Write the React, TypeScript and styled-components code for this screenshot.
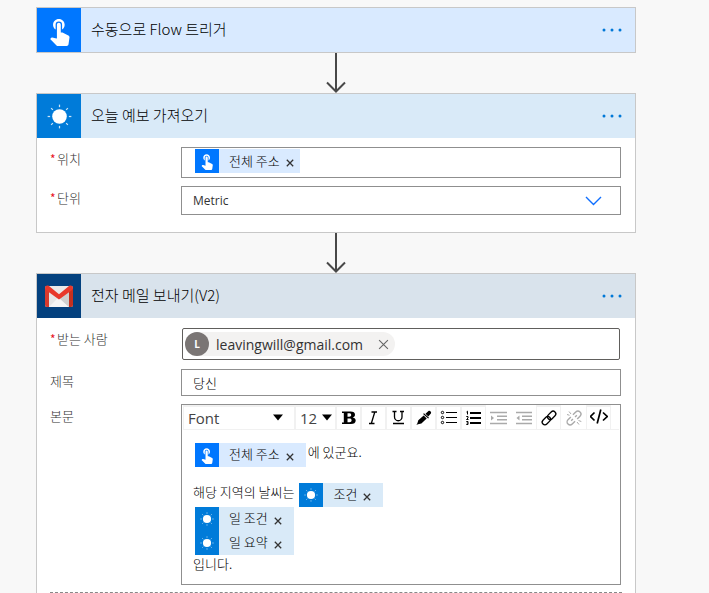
import React from "react";
import styled, { createGlobalStyle, css } from "styled-components";
import { MdTouchApp } from "react-icons/md";

const GlobalStyle = createGlobalStyle`
  * { box-sizing: border-box; }
  body {
    margin: 0;
    background: #f8f8f8;
    color: #333;
    font-family: "Open Sans", "Noto Sans CJK KR", sans-serif;
    font-size: 13px;
  }
  button, input, select { font: inherit; color: inherit; }
`;

const Page = styled.main`
  height: 100vh;
  overflow: hidden;
  padding: 7px 73px 0 36px;
`;

const Card = styled.section`
  border: 1px solid #c8c8c8;
  background: #fff;
`;

const CardHeader = styled.header<{ $tint: string }>`
  display: flex;
  align-items: center;
  height: 44px;
  background: ${(p) => p.$tint};
`;

const Brand = styled.span<{ $color: string; $small?: boolean }>`
  display: flex;
  flex: none;
  align-items: center;
  justify-content: center;
  width: ${(p) => (p.$small ? 24 : 44)}px;
  height: ${(p) => (p.$small ? 24 : 44)}px;
  background: ${(p) => p.$color};
  color: #fff;
`;

const Title = styled.h2`
  flex: 1;
  margin: 0 0 0 10px;
  padding-bottom: 3px;
  color: #000;
  font-size: 15px;
  font-weight: 300;
  font-family: "Noto Sans CJK KR", sans-serif;
`;

const IconButton = styled.button`
  display: flex;
  align-items: center;
  justify-content: center;
  flex: none;
  padding: 0;
  border: 0;
  background: none;
  cursor: pointer;
`;

const MoreButton = styled(IconButton)`
  width: 24px;
  height: 24px;
  margin-right: 11px;
  color: #0078d7;
`;

const Connector = styled.div`
  display: flex;
  justify-content: center;
  height: 40px;
  color: #484848;
`;

const CardBody = styled.div<{ $bottom: number }>`
  display: flex;
  flex-direction: column;
  gap: 8px;
  padding: 9px 14px ${(p) => p.$bottom}px 13px;
`;

const FieldRow = styled.div`
  display: grid;
  grid-template-columns: 131px 1fr;
  align-items: start;
`;

const Label = styled.label`
  display: flex;
  padding-top: 2px;
  color: #333;
  font-family: "Noto Sans CJK KR", sans-serif;
  font-weight: 300;
  line-height: 20px;
`;

const Required = styled.span`
  width: 7px;
  color: #e81123;
  font-size: 12px;
  font-weight: 400;
`;

const box = css`
  width: 100%;
  border: 1px solid #8f8f8f;
  background: #fff;
`;

const TokenField = styled.div`
  ${box}
  display: flex;
  align-items: flex-start;
  height: 31px;
  padding: 1px 13px;
`;

const PeopleField = styled.div`
  ${box}
  display: flex;
  align-items: center;
  width: auto;
  height: 32px;
  margin: 1px;
  padding: 0 2px;
  border-color: #605e5c;
  border-radius: 2px;
`;

const BareInput = styled.input`
  flex: 1;
  min-width: 0;
  align-self: stretch;
  border: 0;
  outline: 0;
  background: none;
`;

const TextInput = styled.input`
  ${box}
  height: 27px;
  padding: 0 11px;
  color: #000;
  font-family: "Noto Sans CJK KR", sans-serif;
  font-weight: 300;
`;

const SelectWrap = styled.div`
  position: relative;
`;

const Select = styled.select`
  ${box}
  height: 29px;
  padding: 0 11px;
  border-radius: 0;
  appearance: none;
  font-size: 12px;
`;

const SelectChevron = styled.svg`
  position: absolute;
  top: 10px;
  right: 19px;
  pointer-events: none;
`;

const TokenBox = styled.span<{ $tint: string; $wide?: boolean }>`
  display: inline-flex;
  align-items: center;
  height: 24px;
  padding-right: ${(p) => (p.$wide ? 10 : 4)}px;
  background: ${(p) => p.$tint};
  color: #000;
  font-family: "Noto Sans CJK KR", sans-serif;
  font-weight: 300;
`;

const TokenText = styled.span`
  margin: 0 4px 0 10px;
  padding-bottom: 2px;
  white-space: nowrap;
`;

const TokenClose = styled(IconButton)`
  width: 12px;
  height: 12px;
  margin-top: 3px;
  color: #333;
`;

const Person = styled.span`
  display: flex;
  align-items: center;
  height: 24px;
  border-radius: 12px;
  background: #f3f2f1;
  color: #333;
`;

const Avatar = styled.span`
  display: flex;
  align-items: center;
  justify-content: center;
  width: 24px;
  height: 24px;
  border-radius: 50%;
  background: #7a7574;
  color: #fff;
  font-size: 10px;
  font-weight: 700;
`;

const PersonName = styled.span`
  margin: 0 8px 0 7px;
  font-size: 14px;
`;

const PersonRemove = styled(IconButton)`
  width: 24px;
  height: 24px;
  color: #666;
`;

const Editor = styled.div`
  ${box}
`;

const Toolbar = styled.div`
  display: flex;
  margin: 0 1px 1px;
  height: 25px;
  border-bottom: 1px solid #f1f1f1;
`;

const cell = css`
  height: 25px;
  border: 1px solid #f1f1f1;
  border-top-width: 2px;
`;

const ToolSelectWrap = styled.span<{ $width: number }>`
  position: relative;
  flex: none;
  width: ${(p) => p.$width}px;
`;

const ToolSelect = styled.select`
  ${cell}
  width: 100%;
  padding: 0 4px;
  border-radius: 0;
  background: none;
  appearance: none;
  color: #444;
  font-size: 15px;
  line-height: 22px;
`;

const ToolCaret = styled.svg<{ $right: number }>`
  position: absolute;
  top: 9px;
  right: ${(p) => p.$right}px;
  pointer-events: none;
`;

const ToolButton = styled(IconButton)<{ $off?: boolean }>`
  ${cell}
  width: 25px;
  border-color: ${(p) => (p.$off ? "transparent" : "#f1f1f1")};
  color: ${(p) => (p.$off ? "#aaa" : "#000")};
`;

const Content = styled.div`
  display: flex;
  flex-direction: column;
  min-height: 152px;
  padding: 12px 11px 11px;
  font-family: "Noto Sans CJK KR", sans-serif;
  font-weight: 300;
  color: #000;
`;

const Line = styled.div<{ $gap?: boolean }>`
  display: flex;
  gap: 2px;
  margin-top: ${(p) => (p.$gap ? 16 : 0)}px;
  padding-left: 2px;
  line-height: 18px;
`;

const TextLine = styled(Line)`
  gap: 5px;
  padding-left: 0;
`;

const Attachments = styled.div`
  height: 80px;
  margin: 0 13px;
  border: 1px dashed #888;
`;

const rays = [0, 45, 90, 135, 180, 225, 270, 315];

const Sun = ({ size }: { size: number }) => (
  <svg width={size} height={size} viewBox="0 0 24 24" aria-hidden="true">
    <circle cx="12" cy="12" r="7" fill="#fff" />
    {rays.map((a) => (
      <path
        key={a}
        d="M12 0.6V3"
        stroke="#fff"
        strokeWidth="1.2"
        opacity="0.8"
        transform={`rotate(${a} 12 12)`}
      />
    ))}
  </svg>
);

const Gmail = () => (
  <svg width="30" height="22" viewBox="0 0 30 22" aria-hidden="true">
    <rect x="1" y="1" width="28" height="21" rx="2" fill="#e6e6e6" />
    <path d="M5 22 15 12l10 10z" fill="#f5f5f5" />
    <path d="M15 13 25 22h2V5z" fill="#cfcfcf" />
    <path d="M1 22V3l4 3v16H3a2 2 0 0 1-2-2z" fill="#d93a2d" />
    <path d="M29 20V3l-4 3v16h2a2 2 0 0 0 2-2z" fill="#c4301f" />
    <path d="M5 1h20L15 9z" fill="#e9e9e9" />
    <path d="M1 3C1 .6 3.4 0 5 1l10 8.200L25 1c1.600-1 4-.4 4 2 0 1-.4 1.700-1.200 2.300L15 14.500 2.200 5.300C1.400 4.700 1 4 1 3z" fill="#e8382b" />
  </svg>
);

const Cross = ({ size, weight }: { size: number; weight: number }) => (
  <svg width={size} height={size} viewBox="0 0 10 10" aria-hidden="true">
    <path d="M1 1 9 9M9 1 1 9" stroke="currentColor" strokeWidth={weight} fill="none" />
  </svg>
);

const Arrow = () => (
  <Connector>
    <svg width="22" height="40" viewBox="0 0 22 40" fill="none" stroke="currentColor" strokeWidth="2" aria-hidden="true">
      <path d="M11 0V38M2 29.500 11 38.500 20 29.500" />
    </svg>
  </Connector>
);

const More = () => (
  <MoreButton aria-label="메뉴">
    <svg width="24" height="4" viewBox="0 0 24 4" fill="currentColor" aria-hidden="true">
      <circle cx="4" cy="2" r="1.500" />
      <circle cx="12" cy="2" r="1.500" />
      <circle cx="20" cy="2" r="1.500" />
    </svg>
  </MoreButton>
);

const kinds = {
  touch: { color: "#0077ff", tint: "#d9eaff" },
  sun: { color: "#007bd9", tint: "#d9eaf8" },
};

const Token = ({ kind, text, wide }: { kind: "touch" | "sun"; text: string; wide?: boolean }) => (
  <TokenBox $tint={kinds[kind].tint} $wide={wide}>
    <Brand $color={kinds[kind].color} $small>
      {kind === "touch" ? <MdTouchApp size={18} /> : <Sun size={14} />}
    </Brand>
    <TokenText>{text}</TokenText>
    <TokenClose aria-label={`${text} 제거`}>
      <Cross size={8} weight={1.6} />
    </TokenClose>
  </TokenBox>
);

const Caret = ({ right }: { right: number }) => (
  <ToolCaret $right={right} width="10" height="7" viewBox="0 0 10 7" aria-hidden="true">
    <path d="M0 0.500h10L5 6.500z" fill="#000" />
  </ToolCaret>
);

const chain = (
  <g transform="rotate(-45 9 9)" fill="none" stroke="currentColor" strokeWidth="1.300">
    <rect x="0.500" y="6.300" width="9.500" height="5.400" rx="2.700" />
    <rect x="8" y="6.300" width="9.500" height="5.400" rx="2.700" />
  </g>
);

const tools: { name: string; off?: boolean; art: React.ReactNode }[] = [
  {
    name: "굵게",
    art: (
      <path
        d="M2 2.500h8.500c2.900 0 4.500 1.200 4.500 3.200 0 1.400-.9 2.300-2.200 2.700 1.800.3 2.900 1.500 2.900 3.100 0 2.400-1.800 3.500-4.800 3.500H2v-1.600h1.800V4.100H2zM7.500 4.300v3.400h1.800c1.200 0 1.900-.6 1.900-1.700s-.7-1.700-1.900-1.700zM7.500 9.400v3.900h2c1.300 0 2.100-.7 2.100-2s-.8-1.900-2.100-1.900z"
        fill="currentColor"
      />
    ),
  },
  { name: "기울임꼴", art: <path d="M6.500 3h5.500M4 14.500h5.500M9.800 3 6.300 14.500" stroke="currentColor" strokeWidth="1.300" fill="none" /> },
  {
    name: "밑줄",
    art: <path d="M2.500 2.500h4M10 2.500h4M4.500 2.500v5.500a3.600 3.600 0 0 0 7.500 0V2.500M3 14.500h11" stroke="currentColor" strokeWidth="1.300" fill="none" />,
  },
  {
    name: "색",
    art: (
      <g fill="currentColor">
        <path d="M10.500 4.800 13.500 2c1-1 3.500.8 2.400 2.500l-2.600 3z" />
        <path d="m9 4.200 5 4.500-.9.900-5-4.500z" />
        <path d="m8.700 6.600 3 2.800-5.300 5-3.400.8-1.600.8 1-1.700.9-3z" />
      </g>
    ),
  },
  {
    name: "글머리 기호",
    art: (
      <g fill="none" stroke="currentColor">
        <circle cx="2.500" cy="3.500" r="1.200" />
        <circle cx="2.500" cy="8.500" r="1.200" />
        <circle cx="2.500" cy="13.500" r="1.200" />
        <path d="M6 3.500h11M6 8.500h11M6 13.500h11" strokeWidth="1.200" />
      </g>
    ),
  },
  {
    name: "번호 매기기",
    art: (
      <g fill="none" stroke="currentColor">
        <path d="M5 4h11M5 9h11M5 14h11" strokeWidth="2" />
        <path d="M1.500 3l1-.8v3.300M1.300 7.500h1.700v1.500L1.500 10.500h2M1.300 12.500h1.700v3H1.300M1.700 14h1.300" />
      </g>
    ),
  },
  {
    name: "들여쓰기",
    off: true,
    art: (
      <g fill="none" stroke="currentColor" strokeWidth="1.400">
        <path d="M0 3.500h17M7 7.200h10M7 10.800h10M0 14.500h17" />
        <path d="M1 6.500v5l3-2.500z" fill="currentColor" stroke="none" />
      </g>
    ),
  },
  {
    name: "내어쓰기",
    off: true,
    art: (
      <g fill="none" stroke="currentColor" strokeWidth="1.400">
        <path d="M1 3.500h16M7 7.200h10M7 10.800h10M1 14.500h16" />
        <path d="M4.500 6.500v5l-3-2.500z" fill="currentColor" stroke="none" />
      </g>
    ),
  },
  { name: "링크", art: chain },
  {
    name: "링크 제거",
    off: true,
    art: (
      <g>
        <g transform="rotate(-45 9 9)" fill="none" stroke="currentColor" strokeWidth="1.400">
          <path d="M7.500 6H3.500a3 3 0 0 0 0 6h4M10.500 6h4a3 3 0 0 1 0 6h-4M5 9h2.500M10.500 9H13" />
        </g>
        <path d="M4 2.500 6 5M2 5.500l2.500.8M12 13l2 2.500M13.500 11.500l2.800 1" stroke="currentColor" fill="none" />
      </g>
    ),
  },
  {
    name: "코드 보기",
    art: <path d="M4.500 3.500.500 7.500 4.500 11.500M13 3.500l4.200 4L13 11.500M10.800.500 7.200 14.500" stroke="currentColor" strokeWidth="1.700" fill="none" />,
  },
];

export default function App() {
  return (
    <>
      <GlobalStyle />
      <Page>
        <Card>
          <CardHeader $tint="#d9eaff">
            <Brand $color="#0077ff">
              <MdTouchApp size={31} />
            </Brand>
            <Title>수동으로 Flow 트리거</Title>
            <More />
          </CardHeader>
        </Card>
        <Arrow />
        <Card>
          <CardHeader $tint="#d9eaf8">
            <Brand $color="#007bd9">
              <Sun size={25} />
            </Brand>
            <Title>오늘 예보 가져오기</Title>
            <More />
          </CardHeader>
          <CardBody $bottom={17}>
            <FieldRow>
              <Label htmlFor="location">
                <Required>*</Required>위치
              </Label>
              <TokenField>
                <Token kind="touch" text="전체 주소" />
                <BareInput id="location" />
              </TokenField>
            </FieldRow>
            <FieldRow>
              <Label htmlFor="units">
                <Required>*</Required>단위
              </Label>
              <SelectWrap>
                <Select id="units" defaultValue="Metric">
                  <option>Metric</option>
                </Select>
                <SelectChevron width="17" height="10" viewBox="0 0 17 10" aria-hidden="true">
                  <path d="M1 1 8.500 8.500 16 1" fill="none" stroke="#0f6fff" strokeWidth="1.400" />
                </SelectChevron>
              </SelectWrap>
            </FieldRow>
          </CardBody>
        </Card>
        <Arrow />
        <Card>
          <CardHeader $tint="#d9e3ec">
            <Brand $color="#04417e">
              <Gmail />
            </Brand>
            <Title>전자 메일 보내기(V2)</Title>
            <More />
          </CardHeader>
          <CardBody $bottom={7}>
            <FieldRow>
              <Label htmlFor="to">
                <Required>*</Required>받는 사람
              </Label>
              <PeopleField>
                <Person>
                  <Avatar>L</Avatar>
                  <PersonName>leavingwill@gmail.com</PersonName>
                  <PersonRemove aria-label="받는 사람 제거">
                    <Cross size={11} weight={1} />
                  </PersonRemove>
                </Person>
                <BareInput id="to" />
              </PeopleField>
            </FieldRow>
            <FieldRow>
              <Label htmlFor="subject">제목</Label>
              <TextInput id="subject" defaultValue="당신" />
            </FieldRow>
            <FieldRow>
              <Label id="body-label">본문</Label>
              <Editor>
                <Toolbar>
                  <ToolSelectWrap $width={112}>
                    <ToolSelect aria-label="글꼴" defaultValue="Font">
                      <option>Font</option>
                    </ToolSelect>
                    <Caret right={12} />
                  </ToolSelectWrap>
                  <ToolSelectWrap $width={41}>
                    <ToolSelect aria-label="글꼴 크기" defaultValue="12">
                      <option>12</option>
                    </ToolSelect>
                    <Caret right={4} />
                  </ToolSelectWrap>
                  {tools.map((t) => (
                    <ToolButton key={t.name} aria-label={t.name} title={t.name} disabled={t.off} $off={t.off}>
                      <svg width="18" height="18" viewBox="0 0 18 18" aria-hidden="true">
                        {t.art}
                      </svg>
                    </ToolButton>
                  ))}
                </Toolbar>
                <Content role="textbox" aria-labelledby="body-label">
                  <Line>
                    <Token kind="touch" text="전체 주소" wide />
                    <span>에 있군요.</span>
                  </Line>
                  <TextLine $gap>
                    <span>해당 지역의 날씨는</span>
                    <Token kind="sun" text="조건" wide />
                  </TextLine>
                  <Line>
                    <Token kind="sun" text="일 조건" wide />
                  </Line>
                  <Line>
                    <Token kind="sun" text="일 요약" wide />
                  </Line>
                  <TextLine>입니다.</TextLine>
                </Content>
              </Editor>
            </FieldRow>
          </CardBody>
          <Attachments />
        </Card>
      </Page>
    </>
  );
}
